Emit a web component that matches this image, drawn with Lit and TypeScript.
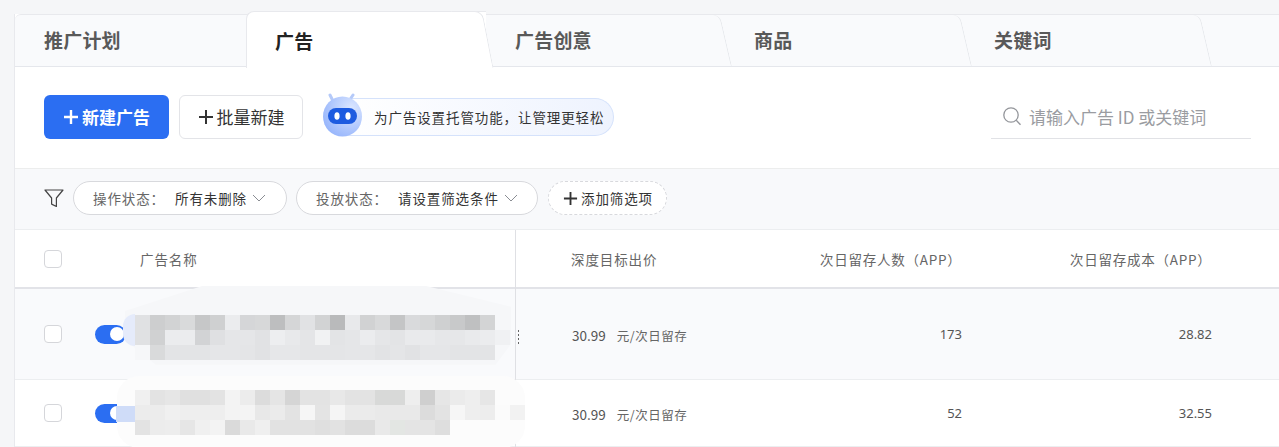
import { LitElement, html, css, svg } from "lit";
import { customElement } from "lit/decorators.js";

const M1: string[][] = [
  "e0e1e3 cdcecf d2d3d4 d9dadb c6c7c8 cfd0d1 ebecee d5d6d8 d7d8d9 bdbebf d5d6d7 e1e2e4 d2d3d4 b9babb e8e9eb d1d2d3 d8d9da c4c5c6 d9dadc d6d7d8 cfd0d1 c8c9ca bfc0c1 d3d4d5".split(" "),
  "e0e1e3 d0d1d2 ebecee ebecee d2d3d5 dfe0e2 e5e6e8 e5e6e8 e1e2e4 edeef0 e8e9eb e4e5e7 f1f2f3 e3e4e6 e5e6e8 ebecee e5e6e8 e3e4e6 e9eaec e9eaec e6e7e9 e6e7e9 e9eaec ebecee f0f1f3".split(" "),
  "f6f7f9 d9dadb e3e4e6 e3e4e6 e3e4e6 e5e6e8 e5e6e8 e4e5e7 e1e2e4 e6e7e9 e6e7e9 e4e5e7 e4e5e7 e4e5e7 e5e6e8 e5e6e8 e2e3e5 e4e5e7 e1e2e4 e5e6e8 e5e6e8 e3e4e6 e3e4e6 e3e4e6".split(" "),
];
const M2: string[][] = [
  "f0f0f0 e3e3e3 e6e6e6 e0e0e0 e0e0e0 e3e3e3 f3f3f3 ececec dcdcdc e5e5e5 d5d5d5 e3e3e3 e3e3e3 e8e8e8 e3e3e3 e3e3e3 d8d9d8 d8d9d8 eeeeee cfcfcf e6e6e6 ebebeb eeeeee e6e6e6".split(" "),
  "ececec ececec f0f0f0 eeeeee eeeeee eeeeee f3f3f3 f4f4f4 e8e8e8 ebebeb e3e3e3 f6f6f6 e4e4e4 f5f5f5 ebebeb ebebeb e9e9e9 e9e9e9 e9e9e9 dcdcdc e3e3e3 f6f6f6 eeeeee ededed fbfbfb f2f2f2".split(" "),
  "e3e3e3 ececec ededed e6e6e6 f0f0f0 f3f3f3 dadada e9e9e9 efefef e2e2e2 e2e2e2 e2e2e2 dfdfdf e2e2e2 dcdcdc dcdcdc e9e9e9 e3e6e3 e4e4e4 e4e4e4 dedede".split(" "),
];

const plus = (size: number, color: string, w = 2) => svg`<svg width=${size} height=${size} viewBox="0 0 16 16"><path d="M8 1v14M1 8h14" stroke=${color} stroke-width=${w} fill="none"/></svg>`;
const chevron = svg`<svg width="14" height="8" viewBox="0 0 14 8"><path d="M1 1l6 6 6-6" stroke="#8a8d93" fill="none"/></svg>`;

@customElement("app-root")
export class AppRoot extends LitElement {
  static styles = css`
    :host { display: block; height: 447px; overflow: hidden; background: #f5f6f8; font-family: "Noto Sans CJK SC", "Noto Sans", sans-serif; color: #333; }
    .card { margin: 14px 0 0 14px; background: #fff; border-left: 1px solid #e8e9ed; height: 433px; position: relative; }
    .tabs { display: flex; background: #f9fafc; border-top: 1px solid #e8e9ed; border-bottom: 1px solid #e5e7ec; box-sizing: border-box; height: 53px; border-top-left-radius: 6px; }
    .tab { position: relative; width: 240px; padding-left: 29px; box-sizing: border-box; font-size: 19px; letter-spacing: .2px; font-weight: 700; color: #595959; line-height: 50px; flex: none; }
    .tab:first-child { width: 231px; }
    .tab:nth-child(3) { width: 239px; }
    .tab::after { content: ""; position: absolute; top: 0; bottom: 0; right: -1px; width: 12px; border-right: 1px solid #e6e8ec; border-top-right-radius: 7px; transform: skewX(13deg); }
    .tab:first-child::after { display: none; }
    .tab.active { background: #fff; color: #222; margin-top: -4px; height: 57px; line-height: 58px; padding-left: 28px; z-index: 2; border-top: 1px solid #e8e9ed; border-left: 1px solid #e8e9ed; border-top-left-radius: 8px; }
    .tab.active::after { background: #fff; border-top: 1px solid #e8e9ed; top: -1px; border-top-right-radius: 8px; z-index: -1; width: 30px; right: -2px; transform: skewX(11deg); }
    .toolbar { display: flex; align-items: center; height: 101px; padding: 0 28px 2px 29px; box-sizing: border-box; }
    .btn { display: flex; align-items: center; justify-content: center; height: 44px; box-sizing: border-box; border-radius: 6px; font-size: 17px; gap: 3px; }
    .btn.primary { width: 125px; background: #2b6ef2; color: #fff; font-weight: 700; }
    .btn.ghost { width: 124px; margin-left: 10px; border: 1px solid #e3e4e8; background: #fff; color: #333; }
    .tip { display: flex; align-items: center; margin-left: 20px; position: relative; height: 42px; }
    .robot { position: relative; z-index: 1; display: block; }
    .tip-text { margin-left: -20px; height: 38px; width: 271px; box-sizing: border-box; border: 1px solid #d5e2fb; border-left: none; border-radius: 0 19px 19px 0; background: linear-gradient(90deg, #fff, #eef3fe); padding-left: 31px; font-size: 13.5px; letter-spacing: .9px; line-height: 37px; white-space: nowrap; color: #333; }
    .search { margin-left: auto; width: 260px; height: 44px; box-sizing: border-box; border-bottom: 1px solid #e1e2e6; display: flex; align-items: center; gap: 7px; padding-left: 11px; font-size: 17px; color: #9a9ca1; white-space: nowrap; }
    .filters { display: flex; align-items: center; height: 62px; box-sizing: border-box; background: #f8f9fb; border-top: 1px solid #eceded; border-bottom: 1px solid #eceef0; padding: 0 0 2px 29px; }
    .pill { display: flex; align-items: center; height: 34px; box-sizing: border-box; border: 1px solid #d8d9dd; border-radius: 17px; background: #fff; font-size: 13.5px; letter-spacing: .9px; white-space: nowrap; padding-left: 19px; }
    .pill .k { color: #666; margin-right: 10px; }
    .pill .v { color: #333; margin-right: 5px; }
    .p1 { width: 214px; margin-left: 9px; }
    .p2 { width: 242px; margin-left: 9px; }
    .add { width: 119px; margin-left: 10px; border: 1px dashed #d8d9dd; padding-left: 14px; gap: 3px; color: #333; }
    .table { position: relative; }
    .row { display: grid; grid-template-columns: 80px 421px 250px 250px 250px; align-items: center; box-sizing: border-box; font-size: 13px; color: #555; }
    .head { height: 59px; border-bottom: 2px solid #e2e3e8; font-size: 13.5px; letter-spacing: .9px; color: #666; }
    .r1 { height: 91px; background: #f9fafc; border-bottom: 1px solid #eceef0; }
    .r2 { height: 67px; border-bottom: 1px solid #eceef0; }
    .cell-check { padding-left: 29px; display: flex; }
    .check { width: 18px; height: 18px; box-sizing: border-box; border: 1px solid #d5d6da; border-radius: 4px; background: #fff; }
    .name { padding-left: 45px; display: flex; align-items: center; }
    .switch { width: 31px; height: 19px; border-radius: 10px; background: #2b6ef2; position: relative; }
    .switch::after { content: ""; position: absolute; right: 2px; top: 2.5px; width: 14px; height: 14px; border-radius: 50%; background: #fff; }
    .deep { padding: 2px 0 0 56px; white-space: nowrap; font-size: 13.5px; }
    .head .deep { padding: 0 0 0 55px; }
    .deep .u { margin-left: 11px; color: #666; font-size: 12.5px; letter-spacing: .5px; }
    .num { text-align: right; padding-right: 54px; font-family: "Noto Sans", sans-serif; }
    .hnum { padding-left: 54px; white-space: nowrap; letter-spacing: .75px; }
    .divider { position: absolute; left: 500px; top: 0; bottom: 0; width: 1px; background: #dfe0e4; z-index: 1; }
    .blob { position: absolute; z-index: 2; }
    .b1 { left: 110px; top: 56px; width: 386px; height: 83px; background: #f6f7f9; clip-path: polygon(20% 0, 78% 0, 100% 25%, 100% 70%, 96% 95%, 8% 95%, 0 65%, 0 30%); }
    .b2 { left: 102px; top: 146px; width: 408px; height: 72px; background: #fcfcfc; border-radius: 22px; }
    .t1 { left: 108px; top: 84px; width: 12px; height: 32px; background: #e5ebfb; border-radius: 14px 0 0 14px; }
    .t2 { left: 101px; top: 176px; width: 19px; height: 16px; background: #cfdcf8; }
    .sliver { position: absolute; z-index: 2; left: 503px; top: 100px; width: 1px; height: 14px; background: repeating-linear-gradient(180deg, #666 0 2px, transparent 2px 4px); }
    .mosaic { position: absolute; z-index: 3; left: 120px; display: grid; grid-template-columns: repeat(26, 15px); grid-auto-rows: 15px; }
    .m1 { top: 85px; }
    .m2 { top: 160px; }
  `;

  private mosaic(cls: string, data: string[][]) {
    return html`<div class="mosaic ${cls}">
      ${data.map((line) => {
        const cells = [...line];
        while (cells.length < 26) cells.push("");
        return cells.map((c) => html`<div style="background:${c ? "#" + c : "transparent"}"></div>`);
      })}
    </div>`;
  }

  render() {
    return html`
      <div class="card">
        <div class="tabs">
          <div class="tab">推广计划</div>
          <div class="tab active">广告</div>
          <div class="tab">广告创意</div>
          <div class="tab">商品</div>
          <div class="tab">关键词</div>
        </div>
        <div class="toolbar">
          <div class="btn primary">${plus(16, "#fff", 2.4)}新建广告</div>
          <div class="btn ghost">${plus(16, "#333", 2)}批量新建</div>
          <div class="tip">
            <svg class="robot" width="40" height="48" viewBox="0 0 40 48">
              <defs>
                <radialGradient id="rb" cx="0.72" cy="0.3" r="0.95">
                  <stop offset="0" stop-color="#dce7ff" />
                  <stop offset="1" stop-color="#8aacfb" />
                </radialGradient>
              </defs>
              <path d="M10 8L7 2M26 8l4-6" stroke="#b5caf9" stroke-width="3" stroke-linecap="round" fill="none" />
              <ellipse cx="19.5" cy="23.5" rx="19.5" ry="20" fill="url(#rb)" />
              <rect x="5" y="15" width="29" height="16" rx="8" fill="#1d5be0" />
              <ellipse cx="14" cy="23" rx="2.6" ry="3.8" fill="#fff" />
              <ellipse cx="25" cy="23" rx="2.6" ry="3.8" fill="#fff" />
            </svg>
            <div class="tip-text">为广告设置托管功能，让管理更轻松</div>
          </div>
          <div class="search">
            <svg width="20" height="20" viewBox="0 0 20 20"><circle cx="9" cy="9" r="7.2" stroke="#94969b" stroke-width="1.3" fill="none" /><path d="M14.2 14.2l4.3 4.6" stroke="#94969b" stroke-width="1.3" /></svg>
            <span>请输入广告 ID 或关键词</span>
          </div>
        </div>
        <div class="filters">
          <svg width="20" height="20" viewBox="0 0 20 20"><path d="M1 2h18l-6.6 8v8.5l-4.8-2.4V10z" stroke="#444" stroke-width="1.2" fill="none" stroke-linejoin="round" /></svg>
          <div class="pill p1"><span class="k">操作状态：</span><span class="v">所有未删除</span>${chevron}</div>
          <div class="pill p2"><span class="k">投放状态：</span><span class="v">请设置筛选条件</span>${chevron}</div>
          <div class="pill add">${plus(15, "#333", 2)}添加筛选项</div>
        </div>
        <div class="table">
          <div class="divider"></div>
          <div class="row head">
            <div class="cell-check"><div class="check"></div></div>
            <div class="name">广告名称</div>
            <div class="deep">深度目标出价</div>
            <div class="hnum">次日留存人数（APP）</div>
            <div class="hnum">次日留存成本（APP）</div>
          </div>
          <div class="row r1">
            <div class="cell-check"><div class="check"></div></div>
            <div><div class="switch"></div></div>
            <div class="deep">30.99<span class="u">元/次日留存</span></div>
            <div class="num">173</div>
            <div class="num">28.82</div>
          </div>
          <div class="row r2">
            <div class="cell-check"><div class="check"></div></div>
            <div><div class="switch"></div></div>
            <div class="deep">30.99<span class="u">元/次日留存</span></div>
            <div class="num">52</div>
            <div class="num">32.55</div>
          </div>
          <div class="blob b1"></div>
          <div class="blob t1"></div>
          <div class="blob b2"></div>
          <div class="blob t2"></div>
          <div class="sliver"></div>
          ${this.mosaic("m1", M1)}
          ${this.mosaic("m2", M2)}
        </div>
      </div>
    `;
  }
}
